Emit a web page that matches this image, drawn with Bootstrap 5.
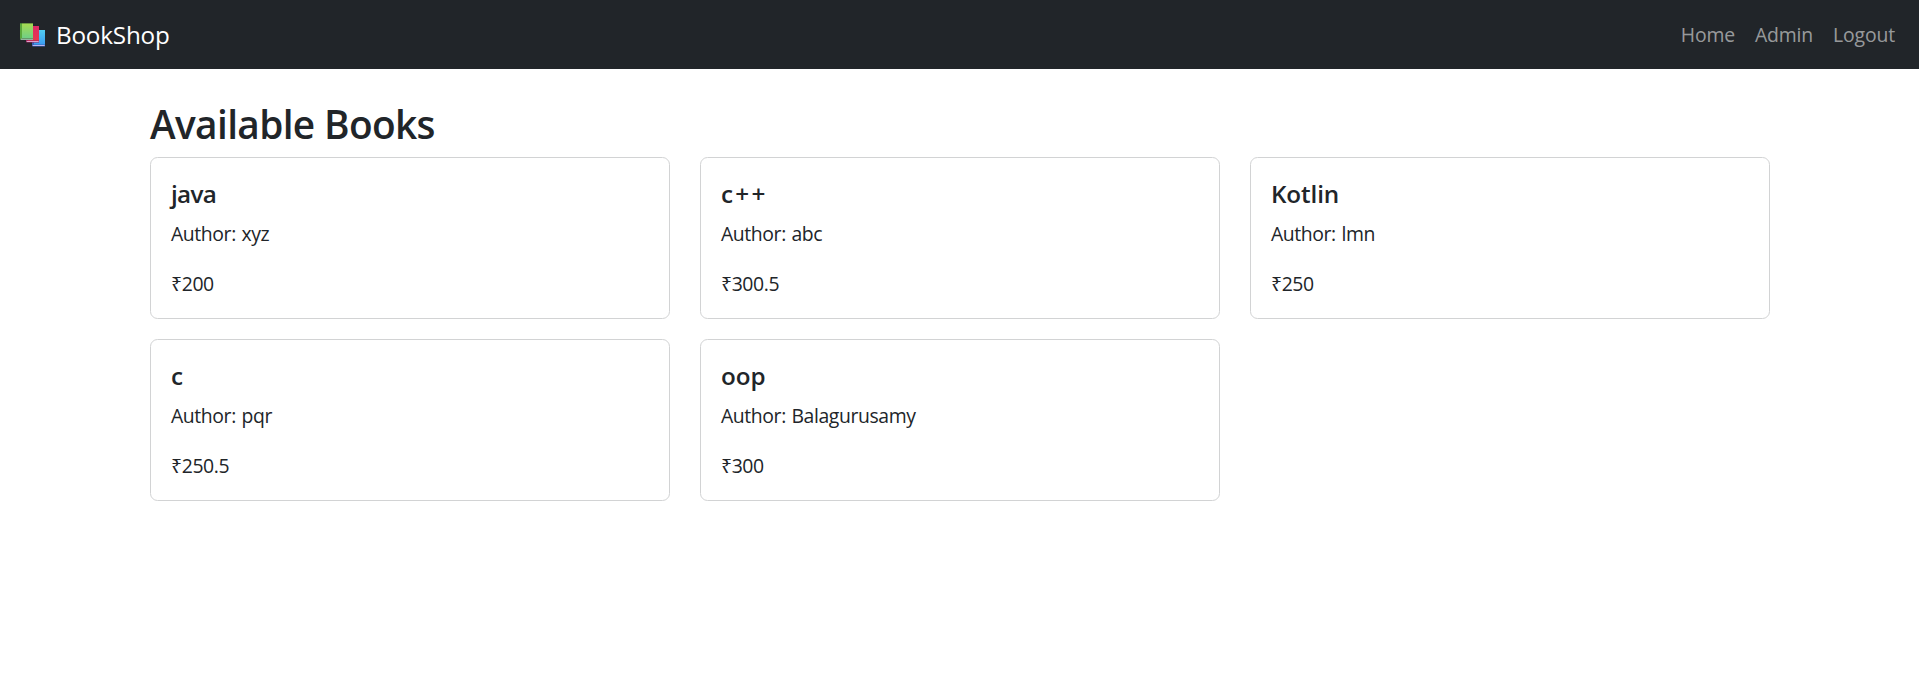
<!DOCTYPE html>
<html lang="en">
<head>
<meta charset="utf-8">
<meta name="viewport" content="width=device-width, initial-scale=1">
<title>BookShop</title>
<link href="https://cdn.jsdelivr.net/npm/bootstrap@5.3.0/dist/css/bootstrap.min.css" rel="stylesheet">
<style>
html{font-size:20px}
body{font-family:"Open Sans","Noto Sans",sans-serif;background:#fff;font-size:.97rem;line-height:1.5rem;letter-spacing:-.4px}
.shop-nav{padding-top:10px;padding-bottom:9px}
.shop-nav .container-fluid{padding-right:14px}
.shop-nav .navbar-brand{font-size:1.2125rem;line-height:1.875rem;letter-spacing:-.2px}
.shop-nav .nav-link{letter-spacing:-.15px}
.shop-nav svg{width:25px;height:24px;margin:0 11px 0 5px}
.shop-body{max-width:1651px;padding-left:16px}
.shop-body h2{font-size:1.94rem;line-height:2.4rem;font-weight:600;letter-spacing:-.64px;padding-top:1px;margin-bottom:9px}
.shop-body .card-title{font-size:1.2125rem;line-height:1.5rem;font-weight:600;letter-spacing:-.1px}
.shop-body .card{border-color:#d2d3d4}
.shop-body .card-body{padding:21px 20px 19px}
.shop-body p{word-spacing:1px}
.shop-body .title-tight{letter-spacing:-.7px}
.shop-body .title-wide{letter-spacing:2.3px}
</style>
</head>
<body>
<nav class="navbar navbar-expand-lg navbar-dark bg-dark shop-nav">
<div class="container-fluid">
<a class="navbar-brand d-flex align-items-center" href="#">
<svg viewBox="0 0 25 24" aria-hidden="true">
<defs>
<linearGradient id="g" x2="0" y2="1"><stop stop-color="#a6dc50"/><stop offset="1" stop-color="#70cf86"/></linearGradient>
<linearGradient id="r" x2="0" y2="1"><stop stop-color="#dc2a68"/><stop offset="1" stop-color="#e8384c"/></linearGradient>
<linearGradient id="b" x2="0" y2="1"><stop stop-color="#52cdf0"/><stop offset="1" stop-color="#3a9df2"/></linearGradient>
</defs>
<path d="M12 7h13v16.500H13q-1 0-1-1z" fill="#3b62b8"/><path d="M14 7h11v14.500H14z" fill="url(#b)"/><path d="M12.700 22h12v1h-12z" fill="#b9b5ee"/>
<path d="M6 3h13v16.500H7q-1 0-1-1z" fill="#98275f"/><path d="M8 3h11v14.500H8z" fill="url(#r)"/><path d="M6.700 18h12v1h-12z" fill="#dfa3cc"/>
<path d="M0 .5h13v16.500H1q-1 0-1-1z" fill="#44853f"/><path d="M0 .5h2v15H0z" fill="#5aa93c"/><path d="M2 .5h11v14.500H2z" fill="url(#g)"/><path d="M.7 15.700h12.300v1H.7z" fill="#b7c8cb"/>
</svg>BookShop</a>
<div class="navbar-nav ms-auto"><a class="nav-link" href="#">Home</a><a class="nav-link" href="#">Admin</a><a class="nav-link" href="#">Logout</a></div>
</div>
</nav>
<main class="container shop-body mt-4">
<h2>Available Books</h2>
<div class="row">
<div class="col-md-4"><div class="card mb-3"><div class="card-body"><h5 class="card-title title-tight">java</h5><p>Author: xyz</p><span>₹200</span></div></div></div>
<div class="col-md-4"><div class="card mb-3"><div class="card-body"><h5 class="card-title title-wide">c++</h5><p>Author: abc</p><span>₹300.5</span></div></div></div>
<div class="col-md-4"><div class="card mb-3"><div class="card-body"><h5 class="card-title">Kotlin</h5><p>Author: lmn</p><span>₹250</span></div></div></div>
<div class="col-md-4"><div class="card mb-3"><div class="card-body"><h5 class="card-title">c</h5><p>Author: pqr</p><span>₹250.5</span></div></div></div>
<div class="col-md-4"><div class="card mb-3"><div class="card-body"><h5 class="card-title">oop</h5><p>Author: Balagurusamy</p><span>₹300</span></div></div></div>
</div>
</main>
<script src="https://cdn.jsdelivr.net/npm/bootstrap@5.3.0/dist/js/bootstrap.bundle.min.js"></script>
</body>
</html>
